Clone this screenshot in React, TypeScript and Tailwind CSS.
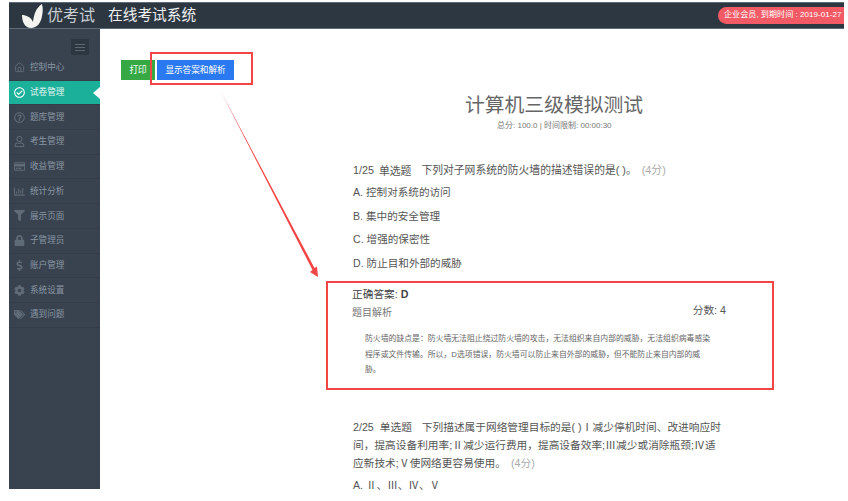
import { FaRegCheckCircle, FaRegQuestionCircle, FaRegUser, FaRegCreditCard, FaRegChartBar, FaLock, FaDollarSign, FaCog, FaTags, FaFilter } from "react-icons/fa";
import { Home } from "lucide-react";

const font = { fontFamily: '"Liberation Sans","Noto Sans CJK SC",sans-serif' };

const items = [
  { label: "控制中心", Icon: Home },
  { label: "试卷管理", Icon: FaRegCheckCircle, active: true },
  { label: "题库管理", Icon: FaRegQuestionCircle },
  { label: "考生管理", Icon: FaRegUser },
  { label: "收益管理", Icon: FaRegCreditCard },
  { label: "统计分析", Icon: FaRegChartBar },
  { label: "展示页面", Icon: FaFilter },
  { label: "子管理员", Icon: FaLock },
  { label: "账户管理", Icon: FaDollarSign },
  { label: "系统设置", Icon: FaCog },
  { label: "遇到问题", Icon: FaTags },
];

function Logo() {
  return (
    <svg width="21" height="24" viewBox="0 0 21 24" className="shrink-0">
      <path d="M20 0 C21 4 21 8 20 12 C19 19 15 24 9 24 C3 24 0 18 0 11 C4 11 9 13 11 18 C12 10 14 4 20 0 Z" fill="#f4f4f0" />
    </svg>
  );
}

function R({ children }: { children: string }) {
  return <span className="inline-block w-[11px] text-center font-['Noto_Sans_CJK_SC']">{children}</span>;
}

export default function App() {
  return (
    <div className="h-[501px] w-[848px] overflow-hidden bg-white pl-[9px] pr-[4px] pt-[2px]" style={font}>
      <div className="relative flex h-[27px] items-center overflow-hidden border-y border-[#5f6b77] bg-[#2c3742] pl-[13px]">
        <Logo />
        <span className="ml-[4px] text-[16px] text-[#c9ced3]">优考试</span>
        <span className="ml-[13px] text-[14.7px] text-[#eef0f1]">在线考试系统</span>
        <div className="ml-auto flex h-[17px] w-[126px] shrink-0 items-center rounded-l-full bg-[#f25b66] pl-[6px] text-[8.1px] whitespace-nowrap text-white">
          企业会员, 到期时间 : 2019-01-27
        </div>
      </div>
      <div className="flex h-[460px]">
        <aside className="flex w-[91px] shrink-0 flex-col bg-[#38434f]">
          <div className="flex justify-end pb-[1px] pr-[11px] pt-[10px]">
            <div className="flex h-[16px] w-[18px] flex-col items-center justify-center gap-[2px] bg-[#2c3742]">
              <i className="block h-px w-[10px] bg-[#5a6672]" />
              <i className="block h-px w-[10px] bg-[#5a6672]" />
              <i className="block h-px w-[10px] bg-[#5a6672]" />
            </div>
          </div>
          {items.map(({ label, Icon, active }) => (
            <div
              key={label}
              className={`relative flex h-[24.7px] items-center border-b border-[#333e49] pl-[5px] text-[8.6px] ${active ? "bg-[#1bb09a] text-[#e8f5f3]" : "text-[#8a96a3]"}`}
            >
              <span className="flex w-[11px] justify-center">
                <Icon size={11} className={active ? "text-white" : "text-[#5f6b77]"} />
              </span>
              <span className="ml-[5px]">{label}</span>
              {active && <span className="absolute right-0 top-[6px] h-0 w-0 border-y-[6px] border-r-[7px] border-y-transparent border-r-white" />}
            </div>
          ))}
        </aside>
        <main className="relative min-w-0 flex-1 bg-white">
          <div className="flex gap-[2px] pl-[21px] pt-[31px]">
            <button className="flex h-[20px] w-[34px] items-center justify-center bg-[#36a945] text-[8.6px] text-white">打印</button>
            <button className="flex h-[20px] w-[77px] items-center justify-center bg-[#2b79f0] text-[8.6px] text-white">显示答案和解析</button>
          </div>

          <div className="pl-[253px] text-[#555]">
            <h1 className="ml-[112px] mt-[11px] text-[19.8px] leading-[28px] text-[#666]">计算机三级模拟测试</h1>
            <p className="ml-[144px] mt-[1px] text-[8px] leading-[12px] text-[#777]">总分: 100.0 | 时间限制: 00:00:30</p>

            <div className="mt-[30px] flex items-start text-[10.8px] leading-[16px]">
              <span>1/25</span>
              <span className="ml-[5px] mt-[1px]">单选题</span>
              <span className="ml-[10px]">下列对子网系统的防火墙的描述错误的是( )。</span>
              <span className="ml-[5px] text-[#aaa]">(4分)</span>
            </div>
            <p className="mt-[5px] h-[17px] text-[10.6px] leading-[17px]">A. 控制对系统的访问</p>
            <p className="mt-[6.5px] h-[17px] text-[10.6px] leading-[17px]">B. 集中的安全管理</p>
            <p className="mt-[6.7px] h-[17px] text-[10.6px] leading-[17px]">C. 增强的保密性</p>
            <p className="mt-[6.7px] h-[17px] text-[10.6px] leading-[17px]">D. 防止目和外部的威胁</p>

            <div className="mt-[9px] h-[109px] w-[448px] -translate-x-[27px] border-2 border-[#f24646] pl-[24px] pr-[46px] pt-[3px]">
              <div className="flex justify-between">
                <div>
                  <p className="text-[10.7px] leading-[16px] text-[#444]">正确答案: <b>D</b></p>
                  <p className="mt-[3px] text-[10px] leading-[16px] text-[#777]">题目解析</p>
                </div>
                <p className="mt-[16px] text-[10.7px] leading-[16px] text-[#555]">分数: 4</p>
              </div>
              <p className="ml-[13px] mt-[10px] w-[348px] text-[7.85px] leading-[15.7px] text-[#666]">
                防火墙的缺点是：防火墙无法阻止绕过防火墙的攻击，无法组织来自内部的威胁，无法组织病毒感染程序或文件传输。所以，D选项错误，防火墙可以防止来自外部的威胁，但不能防止来自内部的威胁。
              </p>
            </div>

            <div className="mt-[28px] w-[372px] text-[10.7px] leading-[17px]">
              2/25 <span className="ml-[3px]">单选题</span>
              <span className="ml-[10px]">下列描述属于网络管理目标的是( )<R>Ⅰ</R>减少停机时间、改进响应时间，提高设备利用率;<R>Ⅱ</R>减少运行费用，提高设备效率;<R>Ⅲ</R>减少或消除瓶颈;<R>Ⅳ</R>适应新技术;<R>Ⅴ</R>使网络更容易使用。</span>
              <span className="ml-[5px] text-[#aaa]">(4分)</span>
            </div>
            <p className="mt-[5px] text-[10.6px] leading-[16px]">A. Ⅱ、Ⅲ、Ⅳ、Ⅴ</p>
          </div>

          {/* Annotations over the page */}
          <div className="absolute left-[50px] top-[23px] h-[33px] w-[103px] border-2 border-[#f24646]" />
          <svg className="pointer-events-none absolute left-0 top-0" width="300" height="300">
            <polygon points="120,61 214.5,239 217,237.5 218,248 210,243 212.5,241" fill="#f24646" />
          </svg>
        </main>
      </div>
    </div>
  );
}
